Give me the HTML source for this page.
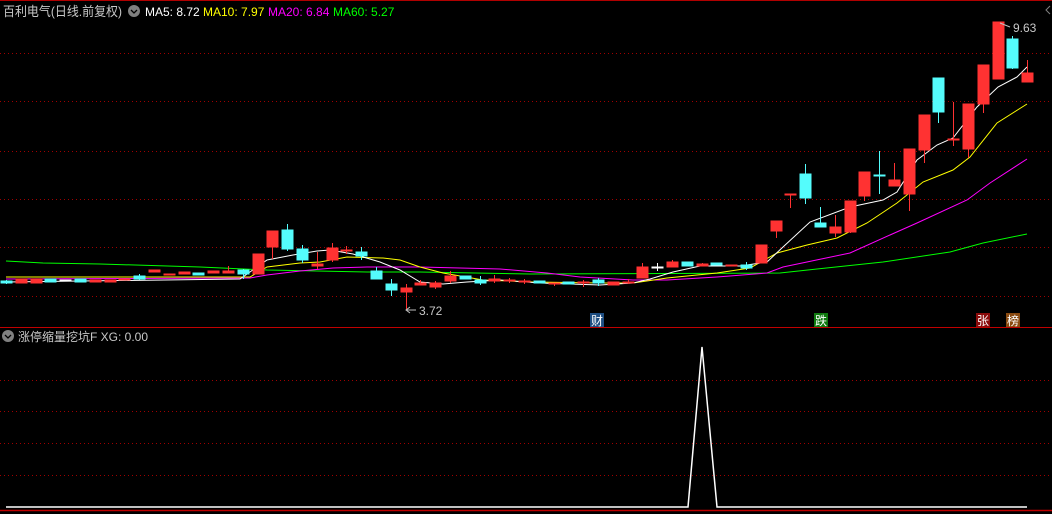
<!DOCTYPE html>
<html><head><meta charset="utf-8"><style>
html,body{margin:0;padding:0;background:#000;width:1052px;height:514px;overflow:hidden}
svg{display:block}
text{font-family:"Liberation Sans","Noto Sans CJK SC",sans-serif}
</style></head><body>
<svg width="1052" height="514" viewBox="0 0 1052 514" xmlns="http://www.w3.org/2000/svg">
<rect width="1052" height="514" fill="#000"/>
<line x1="0" y1="0.5" x2="1052" y2="0.5" stroke="#b00000"/>
<g stroke="#a00000" stroke-dasharray="1 3" stroke-width="1">
<line x1="0" y1="53.5" x2="1052" y2="53.5"/><line x1="0" y1="101.5" x2="1052" y2="101.5"/>
<line x1="0" y1="151.5" x2="1052" y2="151.5"/><line x1="0" y1="199.5" x2="1052" y2="199.5"/>
<line x1="0" y1="247.5" x2="1052" y2="247.5"/><line x1="0" y1="296.5" x2="1052" y2="296.5"/>
<line x1="0" y1="380.5" x2="1052" y2="380.5"/><line x1="0" y1="411.5" x2="1052" y2="411.5"/>
<line x1="0" y1="443.5" x2="1052" y2="443.5"/><line x1="0" y1="475.5" x2="1052" y2="475.5"/>
</g>
<line x1="0" y1="327.5" x2="1052" y2="327.5" stroke="#c00000"/>
<line x1="0" y1="510.5" x2="1052" y2="510.5" stroke="#c00000" stroke-width="1.5"/>

<!-- MA lines -->
<polyline fill="none" stroke="#00ff00" stroke-width="1" points="6,261 43,263 100,264 200,267 267,270 367,272 420,272 530,274 780,273 817,269 883,262 950,252 983,243 1027,234"/>
<polyline fill="none" stroke="#ff00ff" stroke-width="1" points="6,279 250,278 267,275 300,271 333,268 367,267 420,267 500,269 547,273 580,277 633,280 667,280 717,277 767,273 783,267 850,253 890,235 917,223 967,200 990,183 1027,159"/>
<polyline fill="none" stroke="#ffff00" stroke-width="1" points="6,277 250,277 267,267 300,263 320,262 347,257 383,258 400,260 420,267 443,273 483,280 533,282 600,283 633,283 667,278 717,273 750,268 777,253 807,245 837,238 867,223 897,203 923,182 953,170 970,157 997,123 1027,104"/>
<polyline fill="none" stroke="#ffffff" stroke-width="1" points="6,282 240,279 267,260 293,255 317,251 330,250 353,254 380,262 400,270 420,282 443,284 467,282 500,280 540,283 600,285 633,283 650,279 673,272 700,266 740,266 767,262 783,247 810,222 850,207 883,200 897,192 917,160 937,145 953,138 977,107 998,87 1017,77 1027,67"/>

<!-- candles -->
<g stroke-width="1" shape-rendering="crispEdges">
<g stroke="#54fcfc" fill="#54fcfc">
<line x1="6.5" y1="280" x2="6.5" y2="284"/><rect x="1" y="281" width="11" height="2"/>
<rect x="45" y="279" width="11" height="3"/><rect x="75" y="279" width="11" height="3"/>
<line x1="139.5" y1="274" x2="139.5" y2="280"/><rect x="134" y="276" width="11" height="3"/>
<rect x="193" y="273" width="11" height="2"/>
<line x1="243.5" y1="269" x2="243.5" y2="279"/><rect x="238" y="270" width="11" height="4"/>
<line x1="287.5" y1="224" x2="287.5" y2="251"/><rect x="282" y="230" width="11" height="19"/>
<line x1="302.5" y1="245" x2="302.5" y2="263"/><rect x="297" y="249" width="11" height="11"/>
<line x1="361.5" y1="247" x2="361.5" y2="260"/><rect x="356" y="252" width="11" height="4"/>
<line x1="376.5" y1="267" x2="376.5" y2="279"/><rect x="371" y="271" width="11" height="8"/>
<line x1="391.5" y1="279" x2="391.5" y2="296"/><rect x="386" y="284" width="11" height="6"/>
<rect x="460" y="276" width="11" height="3"/>
<line x1="480.5" y1="276" x2="480.5" y2="285"/><rect x="475" y="280" width="11" height="3"/>
<rect x="534" y="281" width="11" height="2"/><rect x="563" y="282" width="11" height="2"/>
<line x1="598.5" y1="278" x2="598.5" y2="286"/><rect x="593" y="280" width="11" height="3"/>
<rect x="682" y="262" width="11" height="4"/><rect x="711" y="263" width="11" height="2"/>
<line x1="746.5" y1="262" x2="746.5" y2="270"/><rect x="741" y="265" width="11" height="3"/>
<line x1="805.5" y1="164" x2="805.5" y2="204"/><rect x="800" y="174" width="11" height="24"/>
<line x1="820.5" y1="207" x2="820.5" y2="227"/><rect x="815" y="223" width="11" height="4"/>
<line x1="879.5" y1="151" x2="879.5" y2="194"/><rect x="874" y="175" width="11" height="1"/>
<line x1="938.5" y1="78" x2="938.5" y2="123"/><rect x="933" y="78" width="11" height="34"/>
<line x1="1012.5" y1="36" x2="1012.5" y2="69"/><rect x="1007" y="39" width="11" height="29"/>
</g>
<g stroke="#ffffff" fill="#ffffff">
<rect x="60" y="280" width="11" height="1"/>
<line x1="657.5" y1="263" x2="657.5" y2="271"/><rect x="652" y="267" width="11" height="1"/>
</g>
<g stroke="#ff3232" fill="#ff3232">
<rect x="16" y="279" width="11" height="4"/><rect x="31" y="279" width="11" height="4"/>
<rect x="90" y="280" width="11" height="2"/><rect x="105" y="280" width="11" height="2"/>
<rect x="119" y="279" width="11" height="1"/><rect x="149" y="270" width="11" height="2"/>
<rect x="164" y="274" width="11" height="1"/><rect x="179" y="272" width="11" height="2"/>
<rect x="208" y="271" width="11" height="2"/>
<line x1="228.5" y1="266" x2="228.5" y2="273"/><rect x="223" y="271" width="11" height="2"/>
<rect x="253" y="254" width="11" height="20"/>
<line x1="272.5" y1="231" x2="272.5" y2="259"/><rect x="267" y="231" width="11" height="16"/>
<line x1="317.5" y1="252" x2="317.5" y2="269"/><rect x="312" y="264" width="11" height="2"/>
<line x1="332.5" y1="243" x2="332.5" y2="262"/><rect x="327" y="248" width="11" height="12"/>
<line x1="346.5" y1="246" x2="346.5" y2="254"/><rect x="341" y="250" width="11" height="1"/>
<line x1="406.5" y1="284" x2="406.5" y2="310"/><rect x="401" y="288" width="11" height="4"/>
<line x1="420.5" y1="280" x2="420.5" y2="285"/><rect x="415" y="283" width="11" height="2"/>
<line x1="435.5" y1="281" x2="435.5" y2="289"/><rect x="430" y="283" width="11" height="4"/>
<line x1="450.5" y1="271" x2="450.5" y2="283"/><rect x="445" y="276" width="11" height="5"/>
<line x1="494.5" y1="275" x2="494.5" y2="283"/><rect x="489" y="279" width="11" height="2"/>
<line x1="509.5" y1="278" x2="509.5" y2="283"/><rect x="504" y="280" width="11" height="1"/>
<line x1="524.5" y1="279" x2="524.5" y2="284"/><rect x="519" y="281" width="11" height="1"/>
<line x1="554.5" y1="283" x2="554.5" y2="286"/><rect x="549" y="283" width="11" height="1"/>
<line x1="583.5" y1="280" x2="583.5" y2="287"/><rect x="578" y="282" width="11" height="1"/>
<rect x="608" y="282" width="11" height="3"/>
<line x1="628.5" y1="279" x2="628.5" y2="284"/><rect x="623" y="282" width="11" height="1"/>
<line x1="642.5" y1="263" x2="642.5" y2="278"/><rect x="637" y="267" width="11" height="11"/>
<line x1="672.5" y1="260" x2="672.5" y2="267"/><rect x="667" y="262" width="11" height="5"/>
<line x1="702.5" y1="263" x2="702.5" y2="266"/><rect x="697" y="264" width="11" height="2"/>
<rect x="726" y="265" width="11" height="1"/>
<rect x="756" y="245" width="11" height="18"/>
<line x1="776.5" y1="221" x2="776.5" y2="238"/><rect x="771" y="221" width="11" height="10"/>
<line x1="790.5" y1="194" x2="790.5" y2="208"/><rect x="785" y="194" width="11" height="1"/>
<line x1="835.5" y1="215" x2="835.5" y2="237"/><rect x="830" y="227" width="11" height="6"/>
<line x1="850.5" y1="201" x2="850.5" y2="233"/><rect x="845" y="201" width="11" height="31"/>
<line x1="864.5" y1="172" x2="864.5" y2="201"/><rect x="859" y="172" width="11" height="24"/>
<line x1="894.5" y1="163" x2="894.5" y2="186"/><rect x="889" y="180" width="11" height="6"/>
<line x1="909.5" y1="149" x2="909.5" y2="211"/><rect x="904" y="149" width="11" height="45"/>
<line x1="924.5" y1="115" x2="924.5" y2="163"/><rect x="919" y="115" width="11" height="35"/>
<line x1="953.5" y1="102" x2="953.5" y2="146"/><rect x="948" y="139" width="11" height="1"/>
<line x1="968.5" y1="104" x2="968.5" y2="158"/><rect x="963" y="104" width="11" height="45"/>
<line x1="983.5" y1="65" x2="983.5" y2="113"/><rect x="978" y="65" width="11" height="39"/>
<rect x="993" y="22" width="11" height="57"/>
<line x1="1027.5" y1="60" x2="1027.5" y2="82"/><rect x="1022" y="73" width="11" height="9"/>
</g>
</g>

<!-- price labels -->
<g stroke="#c0c0c0" fill="none"><polyline points="1000,23 1010,27"/><polyline points="406,310 416,310"/><polyline points="410,307 406,310 410,313"/></g>
<text x="1013" y="32" fill="#c8c8c8" font-size="12">9.63</text>
<text x="419" y="315" fill="#c8c8c8" font-size="12">3.72</text>

<!-- markers -->
<rect x="590" y="313" width="14" height="14" fill="#1e4e82"/><text x="591" y="325" fill="#fff" font-size="12">财</text>
<rect x="814" y="313" width="14" height="14" fill="#0f7a0f"/><text x="815" y="325" fill="#fff" font-size="12">跌</text>
<rect x="976" y="313" width="14" height="14" fill="#8a0c0c"/><text x="977" y="325" fill="#fff" font-size="12">张</text>
<rect x="1006" y="313" width="14" height="14" fill="#8a4a10"/><text x="1007" y="325" fill="#fff" font-size="12">榜</text>

<!-- header -->
<text x="3" y="16" fill="#c8c8c8" font-size="13" textLength="119" lengthAdjust="spacingAndGlyphs">百利电气(日线.前复权)</text>
<circle cx="134" cy="11" r="6" fill="#808080"/><polyline points="131,10 134,13 137,10" fill="none" stroke="#000" stroke-width="1.3"/>
<text x="145" y="16" fill="#ffffff" font-size="12">MA5: 8.72</text>
<text x="203" y="16" fill="#ffff00" font-size="12">MA10: 7.97</text>
<text x="268" y="16" fill="#ff00ff" font-size="12">MA20: 6.84</text>
<text x="333" y="16" fill="#00ff00" font-size="12">MA60: 5.27</text>
<polyline points="1050,6 1046,10 1050,14" fill="none" stroke="#808080"/>

<!-- lower panel -->
<circle cx="8" cy="336" r="6" fill="#808080"/><polyline points="5,335 8,338 11,335" fill="none" stroke="#000" stroke-width="1.3"/>
<text x="18" y="341" fill="#c8c8c8" font-size="12">涨停缩量挖坑F  XG: 0.00</text>
<polyline fill="none" stroke="#ffffff" stroke-width="1.5" points="6,507 688,507 702,347 717,507 1027,507"/>
</svg>
</body></html>
